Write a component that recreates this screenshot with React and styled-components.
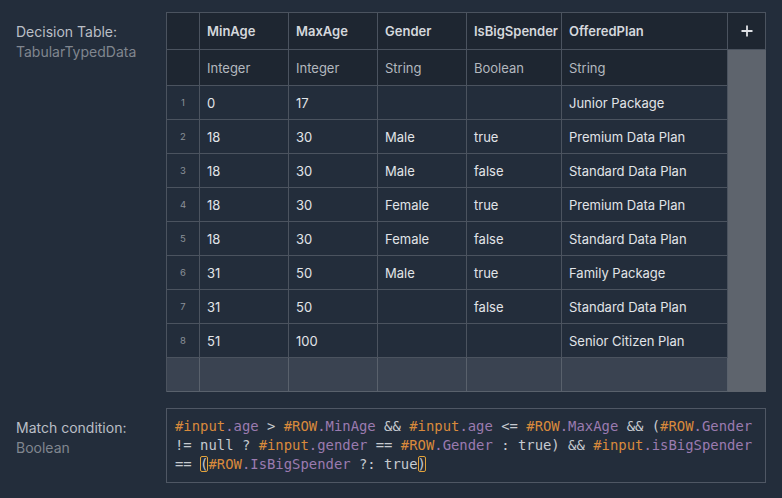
import React from "react";
import styled, { createGlobalStyle } from "styled-components";

const Global = createGlobalStyle`
  html, body { margin: 0; padding: 0; background: #232d3b; overflow: hidden; }
  body { font-family: Inter, "Noto Sans", sans-serif; }
`;

const Page = styled.div`
  width: 782px;
  height: 498px;
  padding-top: 12px;
  box-sizing: border-box;
  display: flex;
  flex-direction: column;
  gap: 16px;
`;

const Field = styled.div`
  display: grid;
  grid-template-columns: 166px 600px;
`;

const Label = styled.div`
  padding: 10px 0 0 16px;
  font-size: 14px;
  line-height: 20px;
  color: #babfc6;
`;

const SubLabel = styled.div`
  color: #80868f;
`;

const Table = styled.div`
  display: grid;
  grid-template-columns: 33px 89px 89px 89px 95px 166px 38px;
  grid-template-rows: 37px 36px repeat(9, 34px);
  border-top: 1px solid #4b535f;
  border-left: 1px solid #4b535f;
  width: 600px;
  box-sizing: border-box;
`;

const Cell = styled.div`
  box-sizing: border-box;
  border-right: 1px solid ${(p) => (p.$empty ? "#59616c" : "#4b535f")};
  border-bottom: 1px solid ${(p) => (p.$empty ? "#59616c" : "#4b535f")};
  background: ${(p) => (p.$head ? "#1e2631" : p.$empty ? "#3a4351" : "#232d3b")};
  display: flex;
  align-items: center;
  padding: 0 7px;
  font-size: 13px;
  white-space: nowrap;
  overflow: hidden;
  color: ${(p) => (p.$type ? "#b3b8bf" : "#e1e4e8")};
  font-weight: ${(p) => (p.$bold ? 600 : 400)};
  ${(p) => (p.$bold ? "color: #d5d8dd;" : "")}
`;

const NumCell = styled(Cell)`
  justify-content: center;
  padding: 0;
  font-size: 9.5px;
  color: #8b9199;
`;

const AddCell = styled(Cell)`
  justify-content: center;
  padding: 0;
`;

const Scroll = styled.div`
  grid-column: 7;
  grid-row: 2 / span 10;
  background: #5e646d;
`;

const CodeBox = styled.div`
  border: 1px solid #4f5764;
  padding: 8px;
  font-family: "DejaVu Sans Mono", "Liberation Mono", monospace;
  font-size: 13.9px;
  line-height: 19px;
  color: #c6cad0;
  white-space: pre;
  height: 75px;
  box-sizing: border-box;
`;

const CodeLine = styled.div`
  height: 19px;
`;

const Hash = styled.span`
  color: #d98a3c;
`;

const Prop = styled.span`
  color: #9b7bb0;
`;

const Bracket = styled.span`
  outline: 1px solid #e3a33a;
  outline-offset: -1px;
  border-radius: 2px;
`;

const NextBox = styled.div`
  margin-left: 166px;
  width: 600px;
  height: 40px;
  border: 1px solid #4f5764;
  box-sizing: border-box;
  margin-top: -1px;
`;

const columns = [
  { name: "MinAge", type: "Integer" },
  { name: "MaxAge", type: "Integer" },
  { name: "Gender", type: "String" },
  { name: "IsBigSpender", type: "Boolean" },
  { name: "OfferedPlan", type: "String" },
];

const rows = [
  ["0", "17", "", "", "Junior Package"],
  ["18", "30", "Male", "true", "Premium Data Plan"],
  ["18", "30", "Male", "false", "Standard Data Plan"],
  ["18", "30", "Female", "true", "Premium Data Plan"],
  ["18", "30", "Female", "false", "Standard Data Plan"],
  ["31", "50", "Male", "true", "Family Package"],
  ["31", "50", "", "false", "Standard Data Plan"],
  ["51", "100", "", "", "Senior Citizen Plan"],
];

const Ref = ({ obj, prop }) => (
  <>
    <Hash>{obj}</Hash>
    <Prop>{prop}</Prop>
  </>
);

export default function App() {
  return (
    <>
      <Global />
      <Page>
        <Field>
          <Label>
            Decision Table:
            <SubLabel>TabularTypedData</SubLabel>
          </Label>
          <Table>
            <NumCell $head />
            {columns.map((c) => (
              <Cell key={c.name} $head $bold>
                {c.name}
              </Cell>
            ))}
            <AddCell $head>
              <svg width="14" height="14" viewBox="0 0 14 14">
                <path d="M7 1.5v11M1.5 7h11" stroke="#dfe2e6" strokeWidth="1.8" />
              </svg>
            </AddCell>
            <Scroll />
            <NumCell $head />
            {columns.map((c) => (
              <Cell key={c.name} $head $type>
                {c.type}
              </Cell>
            ))}
            {rows.map((r, i) => (
              <React.Fragment key={i}>
                <NumCell>{i + 1}</NumCell>
                {r.map((v, j) => (
                  <Cell key={j}>{v}</Cell>
                ))}
              </React.Fragment>
            ))}
            <NumCell $empty />
            {columns.map((c) => (
              <Cell key={c.name} $empty />
            ))}
          </Table>
        </Field>
        <Field>
          <Label>
            Match condition:
            <SubLabel>Boolean</SubLabel>
          </Label>
          <CodeBox>
            <CodeLine>
              <Ref obj="#input" prop=".age" />
              {" > "}
              <Ref obj="#ROW" prop=".MinAge" />
              {" && "}
              <Ref obj="#input" prop=".age" />
              {" <= "}
              <Ref obj="#ROW" prop=".MaxAge" />
              {" && ("}
              <Ref obj="#ROW" prop=".Gender" />
            </CodeLine>
            <CodeLine>
              {"!= null ? "}
              <Ref obj="#input" prop=".gender" />
              {" == "}
              <Ref obj="#ROW" prop=".Gender" />
              {" : true) && "}
              <Ref obj="#input" prop=".isBigSpender" />
            </CodeLine>
            <CodeLine>
              {"== "}
              <Bracket>(</Bracket>
              <Ref obj="#ROW" prop=".IsBigSpender" />
              {" ?: true"}
              <Bracket>)</Bracket>
            </CodeLine>
          </CodeBox>
        </Field>
        <NextBox />
      </Page>
    </>
  );
}
